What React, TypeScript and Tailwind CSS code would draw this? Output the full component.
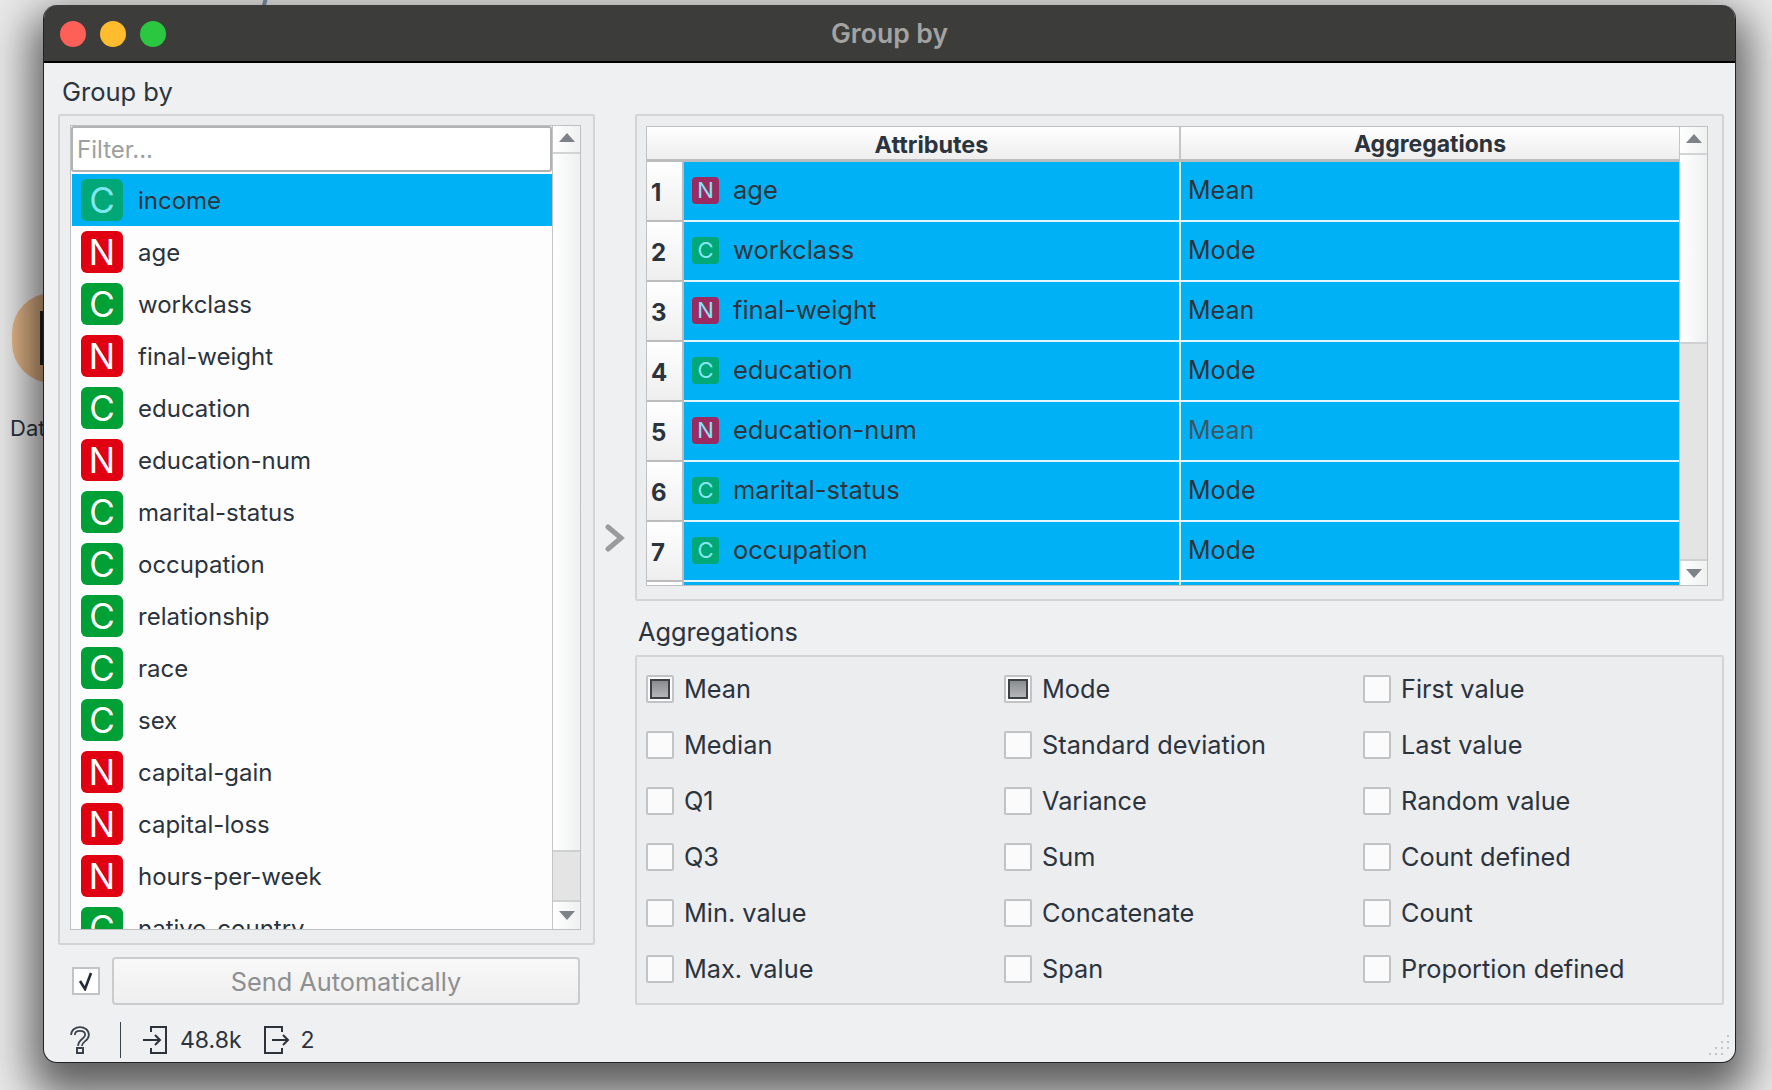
import React from 'react';

const listItems: [string, string][] = [
  ['C', 'income'], ['N', 'age'], ['C', 'workclass'], ['N', 'final-weight'], ['C', 'education'],
  ['N', 'education-num'], ['C', 'marital-status'], ['C', 'occupation'], ['C', 'relationship'],
  ['C', 'race'], ['C', 'sex'], ['N', 'capital-gain'], ['N', 'capital-loss'], ['N', 'hours-per-week'],
  ['C', 'native-country'],
];

const tableRows: [string, string, string][] = [
  ['N', 'age', 'Mean'], ['C', 'workclass', 'Mode'], ['N', 'final-weight', 'Mean'], ['C', 'education', 'Mode'],
  ['N', 'education-num', 'Mean'], ['C', 'marital-status', 'Mode'], ['C', 'occupation', 'Mode'],
];

const aggColumns = [
  ['Mean', 'Median', 'Q1', 'Q3', 'Min. value', 'Max. value'],
  ['Mode', 'Standard deviation', 'Variance', 'Sum', 'Concatenate', 'Span'],
  ['First value', 'Last value', 'Random value', 'Count defined', 'Count', 'Proportion defined'],
];

const Triangle = ({ down }: { down?: boolean }) => (
  <svg width="16" height="9" viewBox="0 0 16 9" className="fill-[#7c8288]">
    <path d={down ? 'M0 0h16L8 9z' : 'M8 0l8 9H0z'} />
  </svg>
);

// trackTop is the height of the empty track above the thumb, thumb the thumb's own height
const ScrollBar = ({ trackTop, thumb }: { trackTop: string; thumb: string }) => (
  <div className="w-[28px] shrink-0 h-full flex flex-col bg-gradient-to-r from-white to-[#eff0f0] border-l border-[#c4c5c7]">
    <div className="h-[28px] shrink-0 flex items-center justify-center border-b-2 border-[#d2d3d4] pb-[3px]">
      <Triangle />
    </div>
    <div className={`${trackTop} shrink-0`} />
    <div className={`${thumb} shrink-0 bg-[#e4e4e4] border-y-2 border-[#cfd0d1]`} />
    <div className="flex-1 flex items-center justify-center">
      <Triangle down />
    </div>
  </div>
);

const Row = ({ kind, name, selected }: { kind: string; name: string; selected?: boolean }) => {
  let badge = kind === 'N' ? 'bg-[#e00012] text-white' : 'bg-[#00a037] text-white';
  if (selected) badge = 'bg-[#00a878] text-[#7fe6ee]';
  return (
    <div className={`h-[52px] shrink-0 ml-[1px] flex items-center pl-[9px] ${selected ? 'bg-[#00b2f5]' : ''}`}>
      <div className={`w-[42px] h-[42px] rounded-[6px] flex items-center justify-center text-[35px] font-normal ${badge}`}>
        {kind}
      </div>
      <span className="ml-[15px] pt-[2px] text-[24px]">{name}</span>
    </div>
  );
};

const TableRow = ({ n, kind, name, agg }: { n: number; kind: string; name: string; agg: string }) => (
  <div className="h-[60px] shrink-0 flex">
    <div className="w-[37px] shrink-0 flex items-center pl-[4px] pt-[3px] text-[24px] font-bold bg-gradient-to-b from-white to-[#eeeeee] border-r-2 border-b-2 border-[#bdbdbd]">
      {n}
    </div>
    <div className="w-[497px] shrink-0 flex items-center pl-[8px] pb-[2px] bg-[#00b2f5] border-r-2 border-b-2 border-[#e6f5fb]">
      <div className={`w-[27px] h-[27px] rounded-[4px] flex items-center justify-center text-[22px] text-[#86e4ee] ${kind === 'N' ? 'bg-[#9a2a62]' : 'bg-[#00a878]'}`}>
        {kind}
      </div>
      <span className="ml-[14px] text-[25.5px]">{name}</span>
    </div>
    <div className="flex-1 flex items-center pl-[7px] bg-[#00b2f5] border-b-2 border-[#e6f5fb]">
      <span className={`text-[25px] ${n === 5 ? 'text-[#3c5666]' : ''}`}>{agg}</span>
    </div>
  </div>
);

const AggCheck = ({ label, on }: { label: string; on?: boolean }) => (
  <div className="h-[28px] flex items-center">
    <div className="w-[28px] h-[28px] shrink-0 bg-[#fbfbfb] border-2 border-[#c2c3c4] rounded-[2px] flex items-center justify-center">
      {on && <div className="w-[20px] h-[20px] border-2 border-[#3d4247] bg-gradient-to-b from-[#8a8d90] to-[#b4b6b8]" />}
    </div>
    <span className="ml-[10px] text-[25.3px] whitespace-nowrap">{label}</span>
  </div>
);

export default function App() {
  return (
    <div className="relative w-[1772px] h-[1090px] overflow-hidden bg-[#e9e9e9] text-[#2b333d] font-['Inter','Liberation_Sans',sans-serif]">
      {/* desktop behind the window */}
      <div className="absolute left-[263px] top-[-3px] w-[4px] h-[9px] bg-[#7b93a3] rotate-[15deg]" />
      <div className="absolute left-[12px] top-[293px] w-[80px] h-[90px] rounded-full bg-gradient-to-r from-[#e6b98a] to-[#c2966c]" />
      <div className="absolute left-[40px] top-[311px] w-[4px] h-[54px] bg-[#222]" />
      <div className="absolute left-[10px] top-[412px] text-[22px]">Data</div>

      <div className="absolute left-[43px] top-[5px] w-[1693px] h-[1058px] rounded-[14px] overflow-hidden flex flex-col bg-[#eff0f2] border-x border-b border-[#222] shadow-[0_20px_44px_12px_rgba(0,0,0,0.6)]">
        {/* Title bar */}
        <div className="relative h-[58px] shrink-0 flex items-center justify-center bg-[#3c3c3a] border-b-2 border-black">
          <div className="absolute left-[16px] top-[16px] flex gap-[14px]">
            <div className="w-[26px] h-[26px] rounded-full bg-[#fe5f57]" />
            <div className="w-[26px] h-[26px] rounded-full bg-[#febc2e]" />
            <div className="w-[26px] h-[26px] rounded-full bg-[#29c840]" />
          </div>
          <span className="pt-[1px] text-[26.5px] font-semibold text-[#a3a3a2]">Group by</span>
        </div>

        {/* Main content */}
        <div className="flex pl-[14px]">
          {/* Left column */}
          <div className="w-[537px] shrink-0 flex flex-col">
            <div className="h-[51px] flex items-center pl-[4px] pt-[8px] text-[25.5px]">Group by</div>
            <div className="h-[831px] pt-[9px] pl-[10px] pr-[12px] pb-[13px] bg-[#ecedef] border-2 border-[#d3d4d6] rounded-[2px]">
              <div className="h-full flex bg-[#fdfdfd] border border-[#bfc0c2]">
                <div className="flex-1 min-w-0 flex flex-col overflow-hidden">
                  <input
                    placeholder="Filter..."
                    className="h-[46px] shrink-0 mb-[2px] px-[4px] bg-white border-2 border-[#b1b2b3] rounded-[3px] text-[24px] placeholder:text-[#9e9fa1] outline-none"
                  />
                  {listItems.map(([kind, name], i) => (
                    <Row key={name} kind={kind} name={name} selected={i === 0} />
                  ))}
                </div>
                <ScrollBar trackTop="h-[696px]" thumb="h-[52px]" />
              </div>
            </div>
            {/* Send row */}
            <div className="flex items-center gap-[12px] mt-[12px] pl-[14px]">
              <div className="w-[28px] h-[28px] bg-white border-2 border-[#c2c3c4] flex items-center justify-center">
                <svg width="20" height="20" viewBox="0 0 20 20" fill="none" className="stroke-[#222b35]">
                  <path d="M4 10l5 8L15 2" strokeWidth="2.6" />
                </svg>
              </div>
              <button className="w-[468px] h-[48px] pt-[2px] rounded-[4px] border-2 border-[#cacbcc] bg-gradient-to-b from-[#f8f8f8] to-[#efefef] text-[25.3px] text-[#8e8f90]">
                Send Automatically
              </button>
            </div>
          </div>

          {/* Chevron */}
          <div className="w-[40px] shrink-0 flex items-start justify-center pt-[461px]">
            <svg width="20" height="28" viewBox="0 0 20 28" fill="none" className="stroke-[#9a9b9c]">
              <path d="M3 3l13 11L3 25" strokeWidth="5" strokeLinecap="round" />
            </svg>
          </div>

          {/* Right column */}
          <div className="w-[1089px] shrink-0 flex flex-col pt-[51px]">
            <div className="h-[487px] pt-[10px] pl-[9px] pr-[14px] pb-[13px] bg-[#ecedef] border-2 border-[#d3d4d6] rounded-[2px]">
              <div className="h-full flex bg-[#fdfdfd] border border-[#bfc0c2]">
                <div className="flex-1 min-w-0 flex flex-col overflow-hidden">
                  <div className="h-[35px] shrink-0 flex bg-gradient-to-b from-white to-[#eeeeee] border-b-[3px] border-[#bcbcbc]">
                    <div className="w-[534px] shrink-0 flex items-center justify-center pl-[37px] pt-[3px] text-[23.4px] font-bold border-r-2 border-[#c6c6c6]">
                      Attributes
                    </div>
                    <div className="flex-1 flex items-center justify-center pt-[3px] text-[23px] font-bold">Aggregations</div>
                  </div>
                  {tableRows.map(([kind, name, agg], i) => (
                    <TableRow key={name} n={i + 1} kind={kind} name={name} agg={agg} />
                  ))}
                  <div className="flex-1 flex">
                    <div className="w-[37px] shrink-0 bg-white border-r-2 border-[#bdbdbd]" />
                    <div className="w-[497px] shrink-0 bg-[#00b2f5] border-r-2 border-[#e6f5fb]" />
                    <div className="flex-1 bg-[#00b2f5]" />
                  </div>
                </div>
                <ScrollBar trackTop="h-[187px]" thumb="h-[219px]" />
              </div>
            </div>

            <div className="h-[54px] flex items-center pl-[3px] pt-[7px] text-[25.3px]">Aggregations</div>

            <div className="h-[350px] bg-[#ecedef] border-2 border-[#d3d4d6] rounded-[2px] pt-[18px] pl-[9px] flex">
              {aggColumns.map((col, c) => (
                <div key={c} className={`flex flex-col gap-[28px] ${c === 0 ? 'w-[359px]' : 'w-[360px]'}`}>
                  {col.map((label, r) => (
                    <AggCheck key={label} label={label} on={r === 0 && c < 2} />
                  ))}
                </div>
              ))}
            </div>
          </div>
        </div>

        {/* Status bar */}
        <div className="flex items-center h-[36px] mt-[17px] pl-[26px] text-[23px]">
          <svg width="20" height="28" viewBox="0 0 20 28" fill="none" className="stroke-[#3a424c]">
            <path d="M3 9c0-8 14-8 14 0 0 5-7 5-7 11" strokeWidth="5.5" />
            <path d="M3 9c0-8 14-8 14 0 0 5-7 5-7 11" strokeWidth="2" className="stroke-[#eff0f2]" />
            <rect x="7" y="22" width="6" height="5" strokeWidth="2" />
          </svg>
          <div className="w-[1px] h-[36px] bg-[#3a424c] ml-[30px]" />
          <svg width="26" height="28" viewBox="0 0 26 28" fill="none" className="ml-[22px] stroke-[#2b333d]">
            <path d="M8 6V1h15v26H8v-5M0 14h16M12 9l5 5-5 5" strokeWidth="2" />
          </svg>
          <span className="ml-[11px]">48.8k</span>
          <svg width="26" height="28" viewBox="0 0 26 28" fill="none" className="ml-[22px] stroke-[#2b333d]">
            <path d="M18 6V1H1v26h17v-5M8 14h15M19 9l5 5-5 5" strokeWidth="2" />
          </svg>
          <span className="ml-[11px]">2</span>
        </div>

        {/* Resize grip */}
        <svg width="26" height="26" viewBox="0 0 26 26" className="absolute right-[2px] bottom-[2px] fill-[#c4c5c7]">
          <rect x="20" y="1" width="2" height="2" />
          <rect x="14" y="7" width="2" height="2" />
          <rect x="20" y="7" width="2" height="2" />
          <rect x="8" y="13" width="2" height="2" />
          <rect x="14" y="13" width="2" height="2" />
          <rect x="20" y="13" width="2" height="2" />
          <rect x="2" y="19" width="2" height="2" />
          <rect x="8" y="19" width="2" height="2" />
          <rect x="14" y="19" width="2" height="2" />
        </svg>
      </div>
    </div>
  );
}
